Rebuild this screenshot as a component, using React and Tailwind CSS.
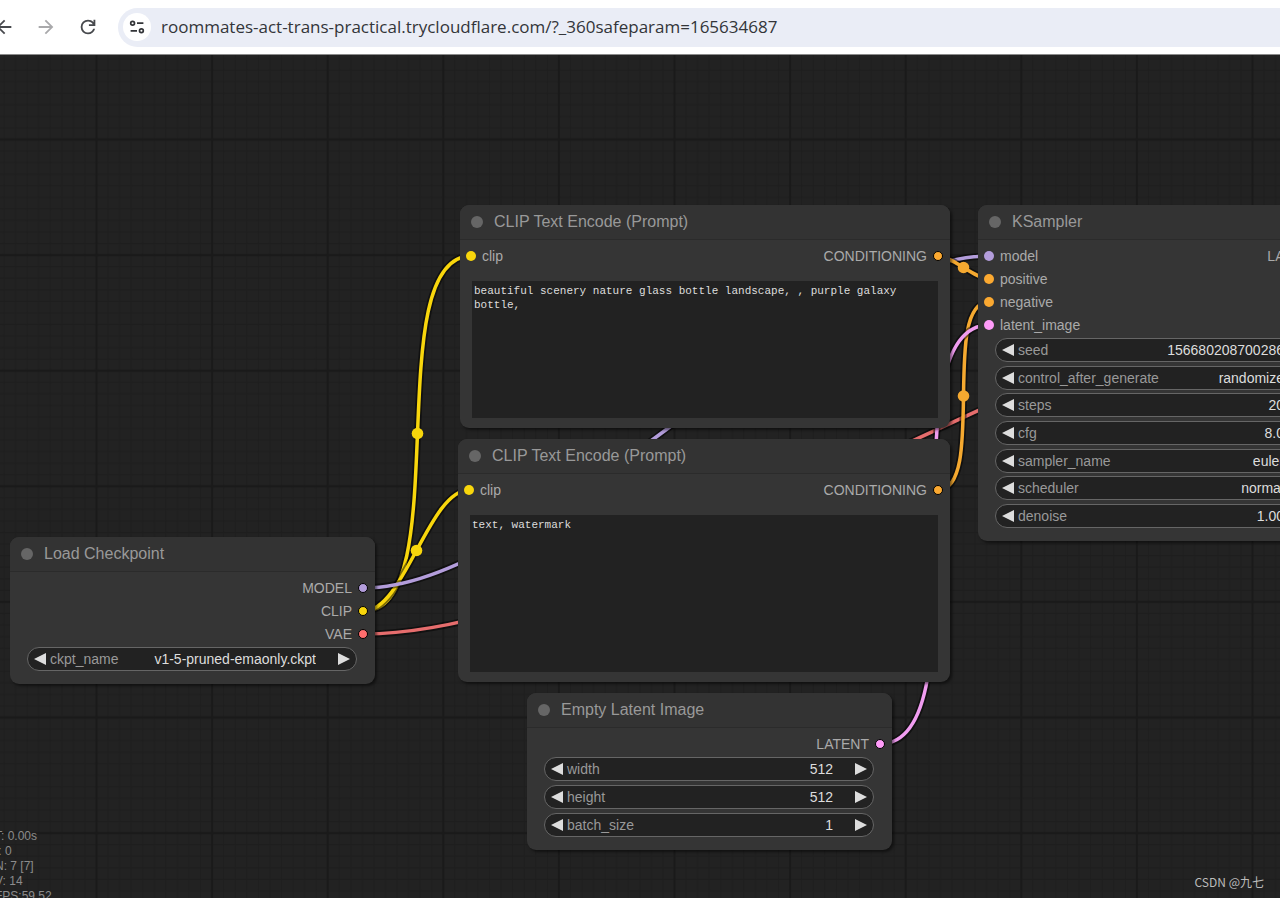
import { useId, useState } from 'react';

const TYPES = {
  MODEL: { dot: 'bg-[#b39ddb]', stroke: '#b39ddb' },
  CLIP: { dot: 'bg-[#f8d60c]', stroke: '#f8d60c' },
  VAE: { dot: 'bg-[#ff6e6e]', stroke: '#e66d6d' },
  CONDITIONING: { dot: 'bg-[#fba931]', stroke: '#f5a930' },
  LATENT: { dot: 'bg-[#ff9cf9]', stroke: '#f09cf0' },
};

// Positions are in canvas pixels, origin at the top left of the graph area
const NODES = [
  {
    id: 'positive',
    title: 'CLIP Text Encode (Prompt)',
    box: { left: 460, top: 150, width: 490, height: 223 },
    inputs: [{ name: 'clip', type: 'CLIP' }],
    outputs: [{ name: 'CONDITIONING', type: 'CONDITIONING' }],
    prompt: 'beautiful scenery nature glass bottle landscape, , purple galaxy bottle,',
  },
  {
    id: 'negative',
    title: 'CLIP Text Encode (Prompt)',
    box: { left: 458, top: 384, width: 492, height: 243 },
    inputs: [{ name: 'clip', type: 'CLIP' }],
    outputs: [{ name: 'CONDITIONING', type: 'CONDITIONING' }],
    prompt: 'text, watermark',
  },
  {
    id: 'checkpoint',
    title: 'Load Checkpoint',
    box: { left: 10, top: 482, width: 365, height: 147 },
    inputs: [],
    outputs: [
      { name: 'MODEL', type: 'MODEL' },
      { name: 'CLIP', type: 'CLIP' },
      { name: 'VAE', type: 'VAE' },
    ],
    widgets: [{ name: 'ckpt_name', value: 'v1-5-pruned-emaonly.ckpt', combo: true }],
  },
  {
    id: 'latent',
    title: 'Empty Latent Image',
    box: { left: 527, top: 638, width: 365, height: 157 },
    inputs: [],
    outputs: [{ name: 'LATENT', type: 'LATENT' }],
    widgets: [
      { name: 'width', value: '512' },
      { name: 'height', value: '512' },
      { name: 'batch_size', value: '1' },
    ],
  },
  {
    id: 'ksampler',
    title: 'KSampler',
    box: { left: 978, top: 150, width: 365, height: 336 },
    inputs: [
      { name: 'model', type: 'MODEL' },
      { name: 'positive', type: 'CONDITIONING' },
      { name: 'negative', type: 'CONDITIONING' },
      { name: 'latent_image', type: 'LATENT' },
    ],
    outputs: [{ name: 'LATENT', type: 'LATENT' }],
    widgets: [
      { name: 'seed', value: '156680208700286' },
      { name: 'control_after_generate', value: 'randomize', combo: true },
      { name: 'steps', value: '20' },
      { name: 'cfg', value: '8.0' },
      { name: 'sampler_name', value: 'euler', combo: true },
      { name: 'scheduler', value: 'normal', combo: true },
      { name: 'denoise', value: '1.00' },
    ],
  },
];

const LINKS = [
  { type: 'CLIP', from: [364, 556], to: [471, 201] },
  { type: 'CLIP', from: [364, 556], to: [469, 435] },
  { type: 'VAE', from: [364, 579], to: [1390, 226] },
  { type: 'MODEL', from: [364, 533], to: [989, 201] },
  { type: 'CONDITIONING', from: [938, 201], to: [989, 224] },
  { type: 'CONDITIONING', from: [938, 435], to: [989, 247] },
  { type: 'LATENT', from: [880, 689], to: [989, 270] },
];

const STATS = ['T: 0.00s', 'I: 0', 'N: 7 [7]', 'V: 14', 'FPS:59.52'];

function linkPath([x1, y1], [x2, y2]) {
  const bend = Math.hypot(x2 - x1, y2 - y1) / 4;
  return `M${x1} ${y1}C${x1 + bend} ${y1} ${x2 - bend} ${y2} ${x2} ${y2}`;
}

function Toolbar() {
  const [url, setUrl] = useState(
    'roommates-act-trans-practical.trycloudflare.com/?_360safeparam=165634687'
  );

  return (
    <header className="flex h-[55px] shrink-0 items-center border-b border-[#8a8a8a] bg-white">
      <nav className="-ml-[17px] flex shrink-0">
        <button aria-label="Back" className="flex w-[42px] justify-center text-[#47494d]">
          <svg viewBox="0 0 24 24" className="size-[22px]" fill="currentColor">
            <path d="M20 11H7.83l5.59-5.59L12 4l-8 8 8 8 1.41-1.41L7.83 13H20v-2z" />
          </svg>
        </button>
        <button aria-label="Forward" className="flex w-[42px] justify-center text-[#a9a9ab]">
          <svg viewBox="0 0 24 24" className="size-[22px]" fill="currentColor">
            <path d="M12 4l-1.41 1.41L16.17 11H4v2h12.17l-5.58 5.59L12 20l8-8z" />
          </svg>
        </button>
        <button aria-label="Reload" className="flex w-[42px] justify-center text-[#47494d]">
          <svg viewBox="0 0 24 24" className="size-[22px]" fill="currentColor">
            <path d="M12 20q-3.35 0-5.675-2.325T4 12q0-3.35 2.325-5.675T12 4q1.725 0 3.3.713T18 6.75V4h2v7h-7V9h4.2q-.8-1.4-2.188-2.2T12 6Q9.5 6 7.75 7.75T6 12t1.75 4.25T12 18q1.925 0 3.475-1.1T17.65 14h2.1q-.7 2.65-2.85 4.325T12 20" />
          </svg>
        </button>
      </nav>
      <div className="ml-[9px] flex h-[39px] flex-1 items-center gap-2.5 rounded-l-full bg-[#eaedf6] pl-[5px]">
        <button
          aria-label="Site information"
          className="flex size-7 shrink-0 items-center justify-center rounded-full bg-white"
        >
          <svg viewBox="0 0 16 16" className="size-4" fill="none" stroke="#333539" strokeWidth="1.7">
            <circle cx="3.6" cy="4.2" r="1.9" />
            <path d="M8 4.2h6.4M1.6 11.8H8" />
            <circle cx="12.4" cy="11.8" r="1.9" />
          </svg>
        </button>
        <input
          aria-label="Address"
          value={url}
          onChange={(e) => setUrl(e.target.value)}
          className="min-w-0 flex-1 bg-transparent font-['Open_Sans',sans-serif] text-[17px] text-[#333539] outline-none"
        />
      </div>
    </header>
  );
}

function Grid() {
  return (
    <svg className="absolute inset-0 size-full" aria-hidden="true">
      <defs>
        <pattern
          id="grid"
          width="100"
          height="100"
          patternUnits="userSpaceOnUse"
          patternTransform="translate(96.5 84.5) scale(1.156)"
        >
          <path
            d="M10 0v100M20 0v100M30 0v100M40 0v100M50 0v100M60 0v100M70 0v100M80 0v100M90 0v100M0 10h100M0 20h100M0 30h100M0 40h100M0 50h100M0 60h100M0 70h100M0 80h100M0 90h100"
            stroke="#1e1e1e"
            strokeWidth="1"
          />
          <path d="M0 0v100M0 0h100M100 0v100M0 100h100" stroke="#1a1a1a" strokeWidth="2" />
        </pattern>
      </defs>
      <rect width="100%" height="100%" fill="url(#grid)" />
    </svg>
  );
}

function Links() {
  return (
    <svg className="absolute inset-0 size-full" fill="none" aria-hidden="true">
      {LINKS.map((link, i) => {
        const d = linkPath(link.from, link.to);
        const color = TYPES[link.type].stroke;
        return (
          <g key={i}>
            <path d={d} stroke="#000" strokeOpacity="0.5" strokeWidth="7" />
            <path d={d} stroke={color} strokeWidth="3.5" />
            <circle
              cx={(link.from[0] + link.to[0]) / 2}
              cy={(link.from[1] + link.to[1]) / 2}
              r="5.8"
              fill={color}
            />
          </g>
        );
      })}
    </svg>
  );
}

function Slots({ inputs, outputs }) {
  return (
    <div className="flex justify-between pt-1 pr-[7px] pl-1.5 text-sm text-[#aaa]">
      <ul>
        {inputs.map((slot) => (
          <li key={slot.name} className="flex h-[23px] items-center gap-1.5">
            <span className={`size-2.5 rounded-full ${TYPES[slot.type].dot}`} />
            {slot.name}
          </li>
        ))}
      </ul>
      <ul>
        {outputs.map((slot) => (
          <li key={slot.name} className="flex h-[23px] items-center justify-end gap-1.5">
            {slot.name}
            <span className={`size-2.5 rounded-full border border-black ${TYPES[slot.type].dot}`} />
          </li>
        ))}
      </ul>
    </div>
  );
}

function Widget({ widget }) {
  const id = useId();
  const [value, setValue] = useState(widget.value);

  const step = (delta) => {
    if (widget.combo) return;
    const decimals = (value.split('.')[1] || '').length;
    setValue((Number(value) + delta).toFixed(decimals));
  };

  return (
    <div className="flex h-6 items-center rounded-full border border-[#666] bg-[#222] px-1.5 text-sm">
      <button aria-label={`Decrease ${widget.name}`} onClick={() => step(-1)}>
        <svg viewBox="0 0 12 12" className="size-3" fill="#ddd">
          <path d="M12 0v12L0 6z" />
        </svg>
      </button>
      <label htmlFor={id} className="ml-1 text-[#999]">
        {widget.name}
      </label>
      <div className="flex min-w-0 flex-1 justify-end pr-[22px] text-[#ddd]">
        {widget.combo ? (
          <select id={id} className="field-sizing-content appearance-none bg-transparent outline-none">
            <option>{widget.value}</option>
          </select>
        ) : (
          <input
            id={id}
            value={value}
            onChange={(e) => setValue(e.target.value)}
            className="w-full bg-transparent text-right outline-none"
          />
        )}
      </div>
      <button aria-label={`Increase ${widget.name}`} onClick={() => step(1)}>
        <svg viewBox="0 0 12 12" className="size-3" fill="#ddd">
          <path d="M0 0v12l12-6z" />
        </svg>
      </button>
    </div>
  );
}

function Node({ node }) {
  return (
    <section
      className="absolute flex flex-col rounded-[9px] bg-[#353535] shadow-[2px_2px_3px_rgba(0,0,0,0.5)]"
      style={node.box}
    >
      <div className="flex h-[35px] shrink-0 items-center gap-[11px] rounded-t-[9px] border-b border-[#2b2b2b] bg-[#333] pl-[11px]">
        <span className="size-3 rounded-full bg-[#666]" />
        <h2 className="text-base text-[#999]">{node.title}</h2>
      </div>
      <Slots inputs={node.inputs} outputs={node.outputs} />
      {node.prompt && (
        <textarea
          aria-label={node.title}
          defaultValue={node.prompt}
          spellCheck={false}
          className="mx-3 mt-3.5 mb-2.5 flex-1 resize-none bg-[#222] px-0.5 py-[3px] font-['Liberation_Mono',monospace] text-[11px] leading-[14px] text-[#ddd] outline-none"
        />
      )}
      {node.widgets && (
        <div className="flex flex-1 flex-col justify-between pt-0.5 pr-[18px] pb-[13px] pl-[17px]">
          {node.widgets.map((widget) => (
            <Widget key={widget.name} widget={widget} />
          ))}
        </div>
      )}
    </section>
  );
}

export default function App() {
  return (
    <div className="flex h-screen flex-col bg-white pb-px font-['Liberation_Sans',Arial,sans-serif]">
      <Toolbar />
      <main className="relative flex-1 overflow-hidden bg-[#222]">
        <Grid />
        <Links />
        {NODES.map((node) => (
          <Node key={node.id} node={node} />
        ))}
        <div className="absolute -bottom-1.5 -left-[5px] text-xs leading-[15px] text-[#8c8c8c]">
          {STATS.map((line) => (
            <p key={line}>{line}</p>
          ))}
        </div>
        <p className="absolute right-4 bottom-2 font-['Noto_Sans_CJK_SC',sans-serif] text-xs text-[#bbb]">
          CSDN @九七
        </p>
      </main>
    </div>
  );
}
